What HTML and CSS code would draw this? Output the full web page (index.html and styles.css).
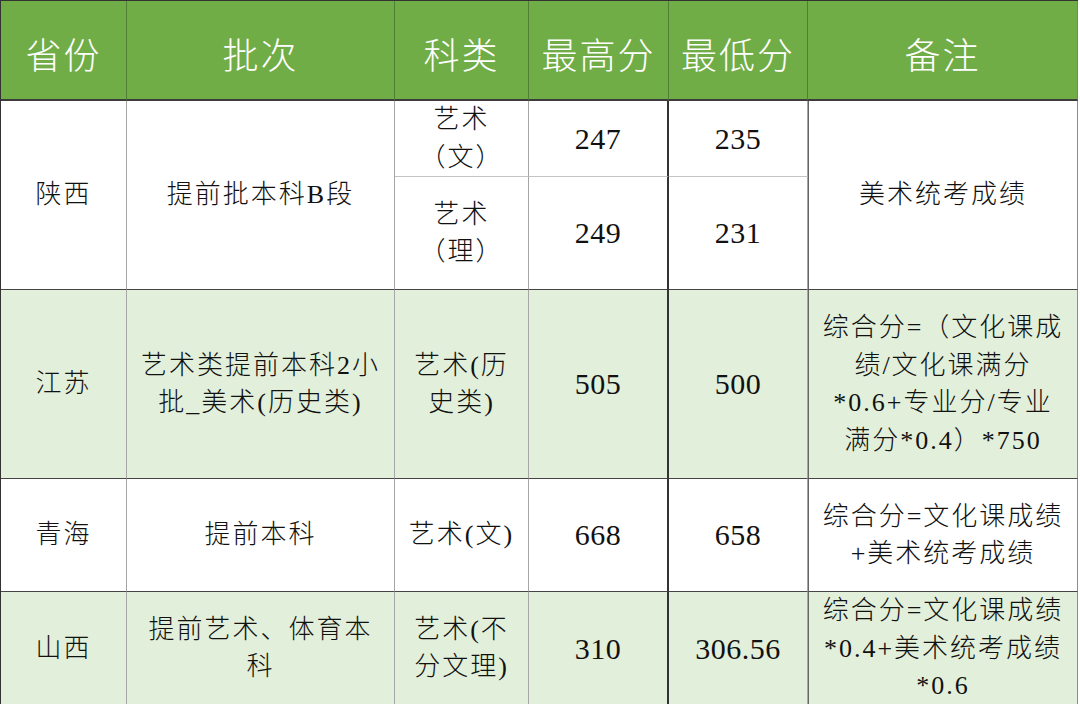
FILE: index.html
```html
<!DOCTYPE html>
<html>
<head>
<meta charset="utf-8">
<title>艺术类录取分数</title>
<link rel="stylesheet" href="styles.css">
</head>
<body>
<table class="scores">
  <colgroup>
    <col class="c-prov">
    <col class="c-batch">
    <col class="c-type">
    <col class="c-max">
    <col class="c-min">
    <col class="c-note">
  </colgroup>
  <thead>
    <tr class="head">
      <th>省份</th>
      <th>批次</th>
      <th>科类</th>
      <th>最高分</th>
      <th>最低分</th>
      <th class="last">备注</th>
    </tr>
  </thead>
  <tbody>
    <tr class="r1a">
      <td rowspan="2">陕西</td>
      <td rowspan="2">提前批本科B段</td>
      <td class="split">艺术<br>（文）</td>
      <td class="num split dark">247</td>
      <td class="num split">235</td>
      <td rowspan="2" class="mid last">美术统考成绩</td>
    </tr>
    <tr class="r1b">
      <td>艺术<br>（理）</td>
      <td class="num dark">249</td>
      <td class="num">231</td>
    </tr>
    <tr class="r2 alt">
      <td>江苏</td>
      <td>艺术类提前本科2小<br>批_美术(历史类)</td>
      <td>艺术(历<br>史类)</td>
      <td class="num dark">505</td>
      <td class="num">500</td>
      <td class="mid last">综合分=（文化课成<br>绩/文化课满分<br>*0.6+专业分/专业<br>满分*0.4）*750</td>
    </tr>
    <tr class="r3">
      <td>青海</td>
      <td>提前本科</td>
      <td>艺术(文)</td>
      <td class="num dark">668</td>
      <td class="num">658</td>
      <td class="mid last">综合分=文化课成绩<br>+美术统考成绩</td>
    </tr>
    <tr class="r4 alt">
      <td>山西</td>
      <td>提前艺术、体育本<br>科</td>
      <td>艺术(不<br>分文理)</td>
      <td class="num dark">310</td>
      <td class="num">306.56</td>
      <td class="mid last">综合分=文化课成绩<br>*0.4+美术统考成绩<br>*0.6</td>
    </tr>
  </tbody>
</table>
</body>
</html>
```

FILE: styles.css
```css
html, body {
  margin: 0;
  padding: 0;
  background: #ffffff;
}

.scores {
  border-collapse: separate;
  border-spacing: 0;
  table-layout: fixed;
  width: 1078px;
  border-top: 1px solid #333333;
  border-left: 1px solid #333333;
  color: #111111;
}

.c-prov { width: 126px; }
.c-batch { width: 268px; }
.c-type { width: 134px; }
.c-max { width: 140px; }
.c-min { width: 139px; }
.c-note { width: 270px; }

.head { height: 100px; }

.head th {
  background: #70ad47;
  color: #ffffff;
  font-family: "Noto Sans CJK SC", sans-serif;
  font-weight: 300;
  font-size: 36px;
  letter-spacing: 2px;
  line-height: 40px;
  padding: 6px 0 0 0;
  border-right: 1px solid #4f7f33;
  border-bottom: 2px solid #3c3c3c;
  text-align: center;
  vertical-align: middle;
}

.head th.last { border-right: 1px solid #6b8f55; }

.scores td {
  padding: 0 2px;
  text-align: center;
  vertical-align: middle;
  font-family: "Liberation Serif", "Times New Roman", "Noto Sans CJK SC", serif;
  font-weight: 300;
  font-size: 26px;
  letter-spacing: 2px;
  line-height: 37.5px;
  border-right: 1px solid #a6a6a6;
  border-bottom: 1px solid #454545;
}

.scores td.dark { border-right: 2px solid #333333; }
.scores td.mid { border-left: 1px solid #666666; }
.scores td.last { border-right: 1px solid #8c8c8c; }
.scores td.split { border-bottom: 1px solid #c4c4c4; }

.scores td.num {
  font-family: "Liberation Serif", "Times New Roman", serif;
  font-weight: 400;
  font-size: 30px;
  letter-spacing: 0.5px;
}

.r1a { height: 75px; }
.r1b { height: 113px; }
.r2 { height: 189px; }
.r3 { height: 113px; }
.r4 { height: 113px; }

.alt td { background: #e2efda; }
```
